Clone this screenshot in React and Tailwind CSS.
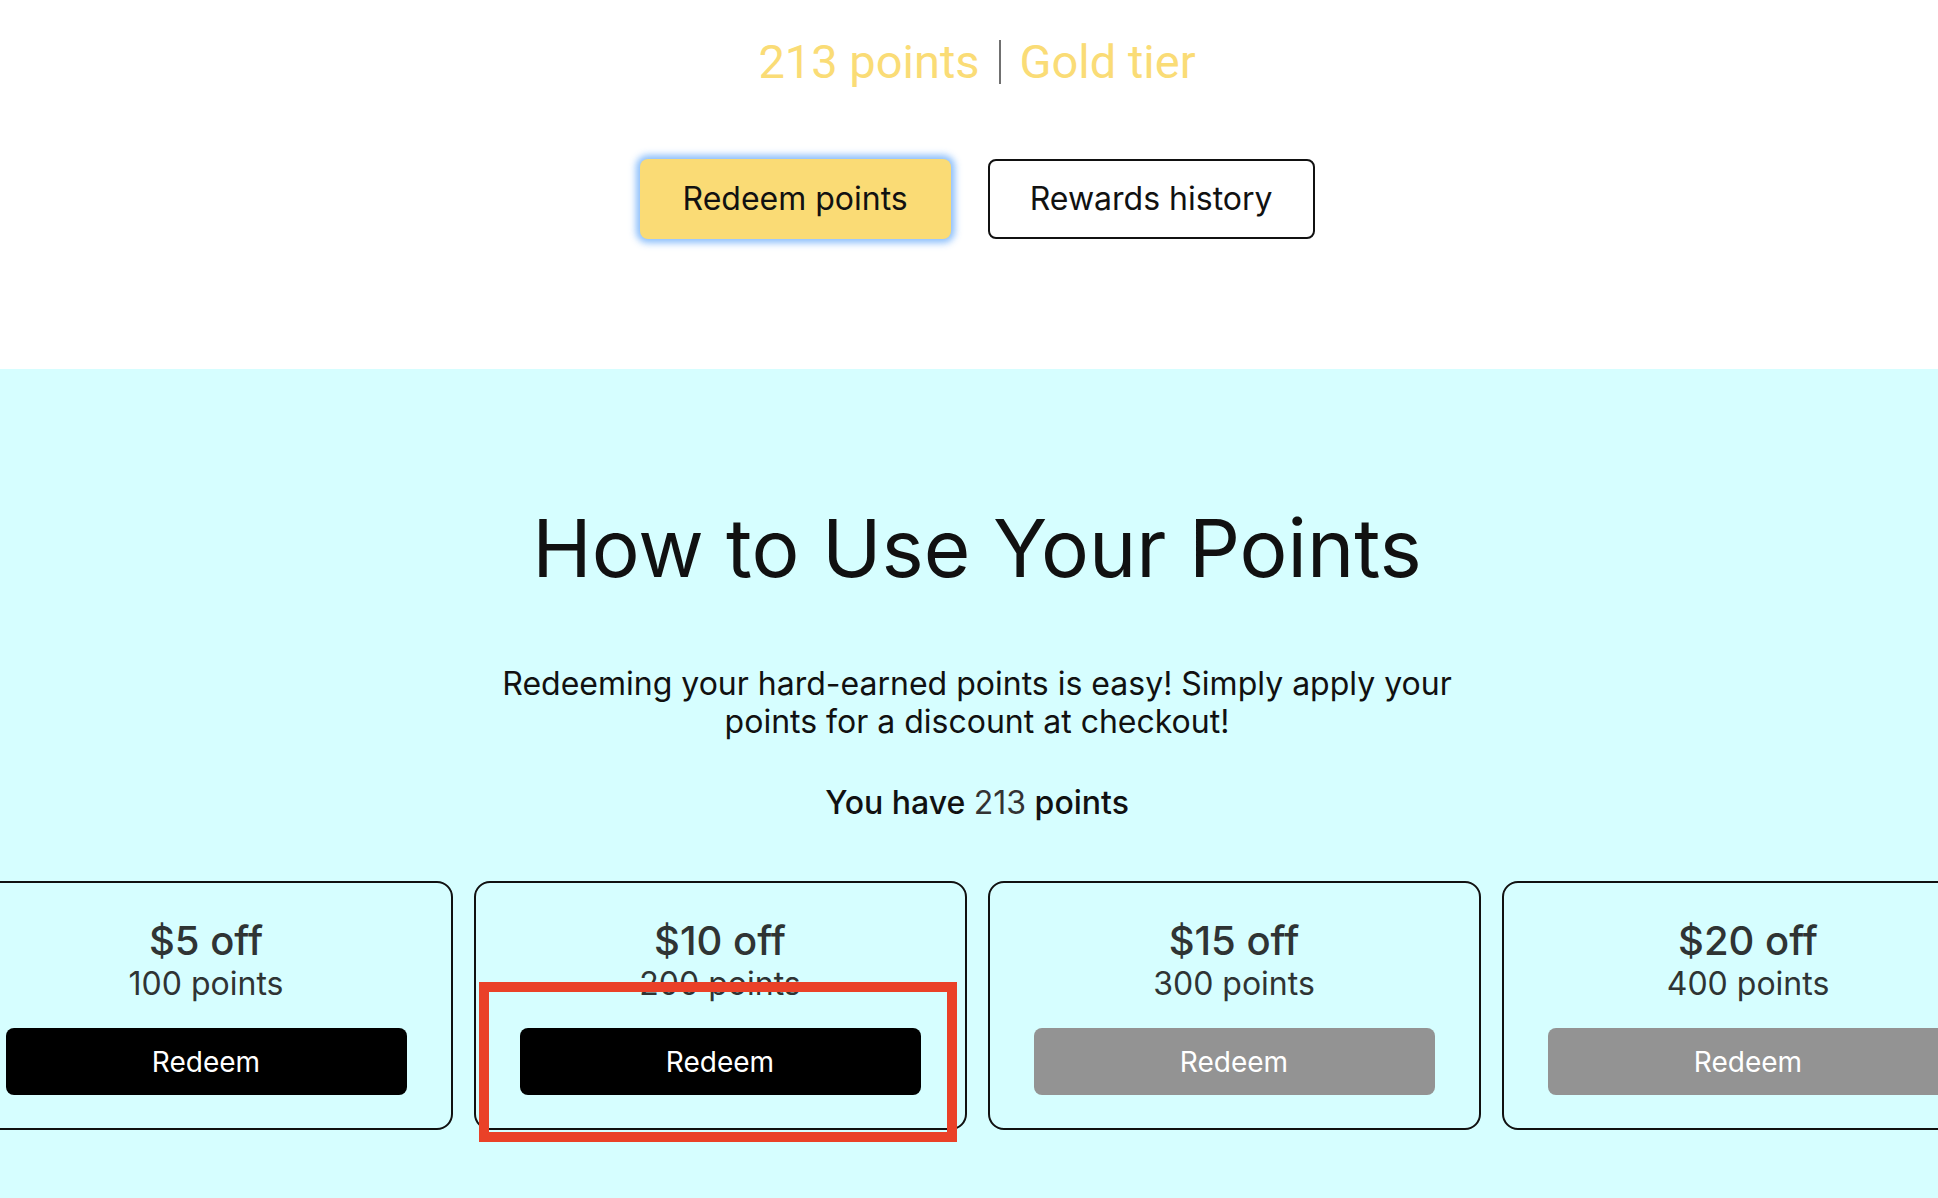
import React from "react";

const REWARDS = [
  { amount: 5, cost: 100 },
  { amount: 10, cost: 200, highlighted: true },
  { amount: 15, cost: 300 },
  { amount: 20, cost: 400 },
];

const BALANCE = 213;

function RewardCard({ amount, cost, highlighted }) {
  const canRedeem = BALANCE >= cost;
  return (
    <div className="relative flex w-[493px] shrink-0 flex-col items-center rounded-2xl border-2 border-[#111] px-[44px] pt-[34px] pb-[33px] text-[#2f3434]">
      <div className="text-[40px] leading-[48px] font-medium">${amount} off</div>
      <div className="text-[32px] leading-[38px]">{cost} points</div>
      <button
        className={`mt-[25px] h-[67px] w-full rounded-lg text-[28px] text-white ${
          canRedeem ? "bg-black" : "bg-[#939393]"
        }`}
      >
        Redeem
      </button>
      {/* marco rojo de anotación sobre el botón */}
      {highlighted && (
        <div className="pointer-events-none absolute left-[3px] top-[99px] h-[160px] w-[478px] border-[10px] border-[#ea4128]" />
      )}
    </div>
  );
}

export default function App() {
  return (
    <div className="min-h-screen overflow-x-hidden bg-white font-['Inter',sans-serif] text-[#111]">
      {/* Cabecera con puntos y nivel */}
      <section className="flex h-[369px] flex-col items-center pl-4 pt-[33px]">
        <div className="flex items-center font-['Roboto',sans-serif] text-[47px] leading-[58px] text-[#fadc76]">
          <span>{BALANCE} points</span>
          <span className="mx-[19px] h-[44px] w-[2px] bg-[#707070]" />
          <span>Gold tier</span>
        </div>
        <div className="mt-[68px] flex gap-[37px]">
          <button className="h-[80px] rounded-lg bg-[#fadb75] px-[43px] text-[32px] text-[#111] shadow-[0_0_7px_4px_rgba(120,180,250,0.85)]">
            Redeem points
          </button>
          <button className="h-[80px] rounded-lg border-2 border-[#111] bg-white px-[40px] text-[32px] text-[#111]">
            Rewards history
          </button>
        </div>
      </section>

      {/* Cómo usar los puntos */}
      <section className="flex min-h-[829px] flex-col items-center bg-[#d6feff] pl-4 pt-[131px] pb-16">
        <h2 className="text-[80px] leading-[96px] text-[#111]">How to Use Your Points</h2>
        <p className="mt-[69px] max-w-[990px] text-center text-[32px] leading-[38px] text-[#111]">
          Redeeming your hard-earned points is easy! Simply apply your points for a discount at checkout!
        </p>
        <p className="mt-[43px] text-[32px] leading-[38px] font-medium text-[#111]">
          You have <span className="font-normal text-[#333]">{BALANCE}</span> points
        </p>
        <div className="mt-[59px] flex w-full justify-center gap-[21px]">
          {REWARDS.map((r) => (
            <RewardCard key={r.amount} {...r} />
          ))}
        </div>
      </section>
    </div>
  );
}
